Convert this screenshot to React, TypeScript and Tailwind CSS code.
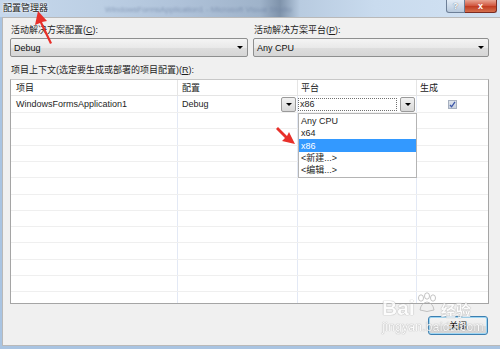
import React from "react";

// 配置管理器对话框（Win7 风格）——截图复刻
const FONT = "font-['Liberation_Sans','Noto_Sans_CJK_SC',sans-serif]";

function Arrow() {
  return (
    <span className="h-0 w-0 border-x-[3px] border-t-[3px] border-x-transparent border-t-black" />
  );
}

function ComboBox({ value }: { value: string }) {
  return (
    <div className="flex h-[19px] items-center justify-between rounded-[2px] border border-[#8e8f8f] bg-[linear-gradient(#f4f4f4,#e9e9e9_50%,#dedede_51%,#d6d6d6)] pl-[3px] pr-[4px] text-[#111]">
      <span>{value}</span>
      <Arrow />
    </div>
  );
}

function DropButton() {
  return (
    <span className="flex h-[15px] w-[15px] items-center justify-center rounded-[2px] border border-[#9a9a9a] bg-[linear-gradient(#f2f2f2,#d8d8d8)]">
      <Arrow />
    </span>
  );
}

const ROW_HEIGHTS = [16, 17, 16, 16, 17, 16, 16, 16, 17, 16, 16, 16];

function EmptyRow({ h }: { h: number }) {
  return (
    <div
      className={`flex border-b border-[#efefef] ${h === 17 ? "h-[17px]" : "h-[16px]"}`}
    >
      <div className="w-[167px] border-r border-[#e3e9f5]" />
      <div className="w-[120px] border-r border-[#e3e9f5]" />
      <div className="w-[119px] border-r border-[#e3e9f5]" />
      <div className="flex-1" />
    </div>
  );
}

const PLATFORMS = ["Any CPU", "x64", "x86", "<新建...>", "<编辑...>"];

export default function App() {
  return (
    <div
      className={`relative h-[349px] w-[500px] overflow-hidden bg-[#a9c4e2] text-[9px] leading-[12px] ${FONT}`}
    >
      {/* 标题栏 */}
      <div className="relative h-[17px] bg-[linear-gradient(90deg,#c6d8ec_0%,#bccfe4_20%,#b0c3da_35%,#9fb3ca_52%,#7f93ab_56%,#b8cbe0_60%,#c9dbee_75%,#d2e2f3_100%)]">
        <span className="absolute left-[3px] top-[2px] text-[9px] text-[#1a1a1a] [text-shadow:0_0_3px_#ffffff,0_0_2px_#ffffff]">
          配置管理器
        </span>
        <span className="absolute left-[105px] top-[4px] text-[8px] text-[#6b7fa0] opacity-60 blur-[0.8px]">
          WindowsFormsApplication1 - Microsoft Visual Studio
        </span>
        <div className="absolute right-[3px] top-0 flex h-[13px]">
          <span className="flex w-[19px] items-center justify-center rounded-bl-[3px] border border-t-0 border-[#6d7f97] bg-[linear-gradient(#e3ecf6,#b8c9dc)] text-[9px] font-bold leading-none text-white [text-shadow:0_0_1px_#33475f]">
            ?
          </span>
          <span className="flex w-[32px] items-center justify-center rounded-br-[3px] border border-l-0 border-t-0 border-[#7a2c23] bg-[linear-gradient(#e8a493,#d0533c_50%,#c03a20_51%,#d5704e)] text-[9px] font-bold leading-none text-white">
            x
          </span>
        </div>
      </div>

      {/* 对话框主体 */}
      <div className="ml-[2px] h-[329px] border-b border-l border-t border-[#b9b9b9] bg-[#f0f0f0] pl-[7px] pt-[6px] text-[#1e1e1e]">
        <div className="flex w-[479px] flex-col">
          <div className="flex gap-[5px]">
            <div className="flex w-[238px] flex-col">
              <span className="ml-px">活动解决方案配置(<u>C</u>):</span>
              <div className="mt-[2px]">
                <ComboBox value="Debug" />
              </div>
            </div>
            <div className="flex w-[236px] flex-col">
              <span className="ml-px">活动解决方案平台(<u>P</u>):</span>
              <div className="mt-[2px]">
                <ComboBox value="Any CPU" />
              </div>
            </div>
          </div>

          <span className="ml-px mt-[7px]">项目上下文(选定要生成或部署的项目配置)(<u>R</u>):</span>

          {/* 项目列表 */}
          <div className="relative mt-[3px] h-[225px] border border-[#a5a5a5] border-t-[#c8c8c8] bg-white">
            <div className="h-[223px] overflow-hidden">
              <div className="flex h-[16px] items-center border-b border-[#e5e5e5] text-[#222]">
                <div className="flex h-full w-[167px] items-center border-r border-[#e5e5e5] pl-[5px]">项目</div>
                <div className="flex h-full w-[120px] items-center border-r border-[#e5e5e5] pl-[4px]">配置</div>
                <div className="flex h-full w-[119px] items-center border-r border-[#e5e5e5] pl-[3px]">平台</div>
                <div className="flex h-full flex-1 items-center pl-[3px]">生成</div>
              </div>

              <div className="flex h-[17px] items-center border-b border-[#efefef]">
                <div className="flex h-full w-[167px] items-center border-r border-[#e3e9f5] pl-[5px]">
                  WindowsFormsApplication1
                </div>
                <div className="flex h-full w-[120px] items-center justify-between border-r border-[#e3e9f5] pl-[4px] pr-px">
                  <span>Debug</span>
                  <DropButton />
                </div>
                <div className="flex h-full w-[119px] items-center gap-[3px] border-r border-[#e3e9f5] pr-px">
                  <span className="flex h-[13px] w-[99px] items-center border border-dotted border-[#707070] pl-px">
                    x86
                  </span>
                  <DropButton />
                </div>
                <div className="flex h-full flex-1 items-center justify-center">
                  <span className="flex h-[9px] w-[9px] items-center justify-center border border-[#a7b0bf] bg-[linear-gradient(#dde3ec,#c9d1dd)]">
                    <svg width="7" height="7" viewBox="0 0 7 7">
                      <path d="M1 4 L2.6 5.8 L6 0.8" fill="none" stroke="#3b55a8" strokeWidth="1.3" />
                    </svg>
                  </span>
                </div>
              </div>

              {ROW_HEIGHTS.map((h, i) => (
                <EmptyRow key={i} h={h} />
              ))}
            </div>

            {/* 平台下拉列表 */}
            <div className="absolute left-[287px] top-[33px] flex w-[119px] flex-col border border-[#b4b4b4] bg-white py-px">
              {PLATFORMS.map((p, i) => (
                <div
                  key={p}
                  className={`flex items-center pl-[2px] ${i === 2 ? "h-[13px] bg-[#3399ff] text-white" : "h-[12px]"}`}
                >
                  {p}
                </div>
              ))}
            </div>
          </div>

          <div className="mt-[12px] flex justify-end pr-px">
            <button
              type="button"
              className="flex h-[19px] w-[60px] items-center justify-center rounded-[3px] border border-[#3c7fb1] bg-[linear-gradient(#f4f4f4,#ececec_50%,#dcdcdc_51%,#d4d4d4)] text-[9px] text-[#111] shadow-[inset_0_0_0_1px_#9fd6f3]"
            >
              关闭
            </button>
          </div>
        </div>
      </div>

      {/* 百度经验水印 */}
      <div className="pointer-events-none absolute left-[382px] top-[292px] flex flex-col font-['Liberation_Sans','Noto_Sans_CJK_SC',sans-serif] text-white opacity-80 [text-shadow:0_0_1px_#9a9a9a,0_0_1px_#9a9a9a]">
        <div className="flex items-end leading-none">
          <span className="text-[21px] font-bold">Bai</span>
          <svg width="24" height="22" viewBox="0 0 24 22" className="mb-[4px]">
            <g fill="none" stroke="#b5b5b5" strokeWidth="1">
              <ellipse cx="6" cy="6" rx="2.5" ry="3.2" />
              <ellipse cx="12" cy="4" rx="2.5" ry="3.2" />
              <ellipse cx="18" cy="6" rx="2.5" ry="3.2" />
              <path d="M5 18 Q6 11 12 10 Q18 11 19 18 Q12 21 5 18 Z" />
            </g>
          </svg>
          <span className="ml-[2px] text-[15px] font-bold">经验</span>
        </div>
        <span className="mt-[3px] text-[12px] leading-none tracking-[0.3px]">jingyan.baidu.com</span>
      </div>

      {/* 红色箭头标注 */}
      <svg className="pointer-events-none absolute left-0 top-0" width="500" height="349">
        <g fill="#e8302a">
          <polygon points="38,11 47,21 42,22 52,43 50,44 40,23 35,25" />
          <polygon points="295,144 282,141 285,138 276,129 278,127 287,136 289,132" />
        </g>
      </svg>
    </div>
  );
}
